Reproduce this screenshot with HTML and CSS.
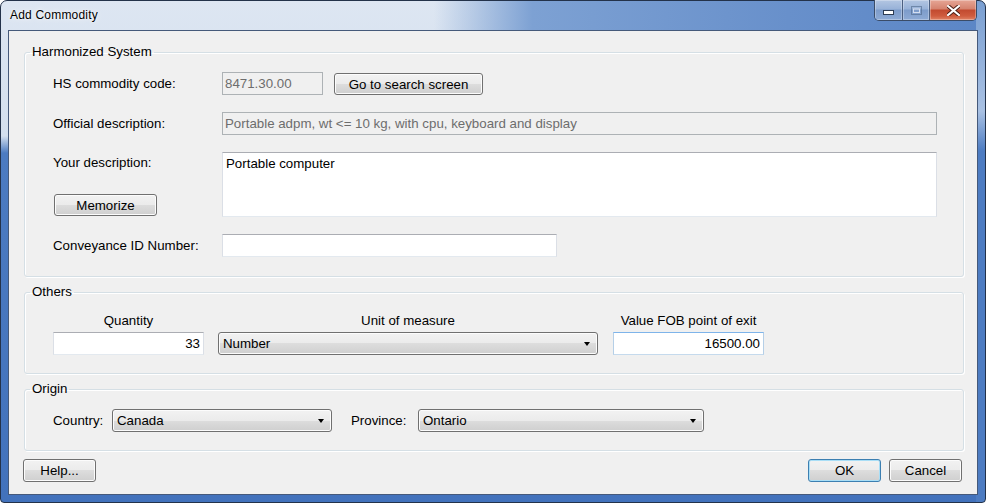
FILE: index.html
```
<!DOCTYPE html>
<html lang="en">
<head>
    <meta charset="utf-8">
    <title>Add Commodity</title>
    <link rel="stylesheet" href="styles.css">
</head>
<body>

    <div class="window">

        <div class="titlebar">
            <span class="title">Add Commodity</span>
            <div class="caption">
                <span class="cap min">
                    <svg width="11" height="5" viewBox="0 0 11 5"><rect x="0.5" y="0.5" width="10" height="4" fill="#fff" stroke="#2c3b53"/></svg>
                </span>
                <span class="cap max">
                    <svg width="11" height="9" viewBox="0 0 11 9"><rect x="0.5" y="0.5" width="10" height="8" fill="none" stroke="#4f6788" opacity="0.6"/><rect x="2.5" y="3" width="6" height="3.5" fill="none" stroke="#e8eef7" opacity="0.8"/></svg>
                </span>
                <span class="cap close">
                    <svg width="13" height="11" viewBox="0 0 13 11"><path d="M1 1 L12 10 M12 1 L1 10" stroke="#4a1d14" stroke-width="4" stroke-linecap="square"/><path d="M1 1 L12 10 M12 1 L1 10" stroke="#fff" stroke-width="2.2" stroke-linecap="square"/></svg>
                </span>
            </div>
        </div>

        <div class="client">

            <fieldset class="group">
                <legend>Harmonized System</legend>
                <div class="hs-grid">
                    <div class="label">HS commodity code:</div>
                    <div class="inline">
                        <div class="tb disabled code">8471.30.00</div>
                        <button type="button" class="btn search">Go to search screen</button>
                    </div>

                    <div class="label">Official description:</div>
                    <div class="tb disabled wide">Portable adpm, wt &lt;= 10 kg, with cpu, keyboard and display</div>

                    <div class="desc-cell">
                        <div class="label">Your description:</div>
                        <button type="button" class="btn memo">Memorize</button>
                    </div>
                    <div class="tb area">Portable computer</div>

                    <div class="label">Conveyance ID Number:</div>
                    <div class="tb conv"></div>
                </div>
            </fieldset>

            <fieldset class="group">
                <legend>Others</legend>
                <div class="others">
                    <div class="col qty">
                        <div class="cap-label">Quantity</div>
                        <div class="tb num">33</div>
                    </div>
                    <div class="col unit">
                        <div class="cap-label">Unit of measure</div>
                        <div class="combo">Number</div>
                    </div>
                    <div class="col value">
                        <div class="cap-label">Value FOB point of exit</div>
                        <div class="tb num focused">16500.00</div>
                    </div>
                </div>
            </fieldset>

            <fieldset class="group">
                <legend>Origin</legend>
                <div class="origin">
                    <div class="label country-label">Country:</div>
                    <div class="combo country">Canada</div>
                    <div class="label province-label">Province:</div>
                    <div class="combo province">Ontario</div>
                </div>
            </fieldset>

            <div class="actions">
                <button type="button" class="btn help">Help...</button>
                <div class="spacer"></div>
                <button type="button" class="btn default">OK</button>
                <button type="button" class="btn">Cancel</button>
            </div>

        </div>

    </div>

</body>
</html>
```

FILE: styles.css
```
html, body {
    margin: 0;
    padding: 0;
    width: 986px;
    height: 503px;
    overflow: hidden;
    background: #fff;
}

body {
    font-family: "Liberation Sans", Arial, sans-serif;
    font-size: 13.3px;
    color: #000;
}

.window {
    width: 986px;
    height: 503px;
    box-sizing: border-box;
    border: solid 1px #23324a;
    border-radius: 7px 7px 4px 4px;
    padding: 0 7px 7px;

    display: flex;
    flex-direction: column;

    background:
        linear-gradient(to bottom, #7a9fd2 0, #a9c1e3 110px, #4d7cc2 150px) right top / 9px 100% no-repeat,
        linear-gradient(to right, rgba(116, 154, 207, 0) 44%, #7da1d3 54%, #6890cb 80%, #5b86c6 100%) left top / 100% 30px no-repeat,
        linear-gradient(to bottom, #dde6f2 0, #d3dfee 135px, #4c7bc1 152px, #4272bc 100%);
}

/* title bar */
.titlebar {
    height: 29px;
    display: flex;
    align-items: flex-start;
}
.titlebar .title {
    padding: 7px 0 0 2px;
    font-size: 12px;
    letter-spacing: 0.2px;
    text-shadow: 0 0 6px rgba(255, 255, 255, 0.95), 0 0 2px rgba(255, 255, 255, 0.9);
}
.caption {
    margin: -1px 1px 0 auto;
    display: flex;
    height: 20px;
    border: solid 1px #3a4c68;
    border-top: none;
    border-radius: 0 0 5px 5px;
    overflow: hidden;
}
.cap {
    display: flex;
    align-items: center;
    justify-content: center;
    height: 20px;
    box-shadow: inset 0 0 0 1px rgba(255, 255, 255, 0.3);
}
.cap.min {
    width: 28px;
    align-items: flex-end;
    box-sizing: border-box;
    padding-bottom: 5px;
    border-right: solid 1px #4b5f80;
    background: linear-gradient(to bottom, #b3c6e2 0%, #98b2d8 45%, #7d9cca 50%, #8eabd5 100%);
}
.cap.max {
    width: 26px;
    border-right: solid 1px #4b5f80;
    background: linear-gradient(to bottom, #b3c6e2 0%, #98b2d8 45%, #7d9cca 50%, #8eabd5 100%);
}
.cap.close {
    width: 46px;
    background: linear-gradient(to bottom, #e6a696 0%, #d5826e 45%, #c24a2f 50%, #cf5c3e 80%, #e08366 100%);
}

/* client area */
.client {
    flex: 1;
    border: solid 1px #45597a;
    background-color: #f0f0f0;
    padding: 14px 13px 0 15px;

    display: flex;
    flex-direction: column;
}

.group {
    margin: 0 0 8px;
    padding: 0;
    min-width: 0;
    border: solid 1px #d5dfe5;
    border-radius: 3px;
    box-shadow: inset 1px 1px 0 #fff, 1px 1px 0 #fff;
}
.group legend {
    margin-left: 5px;
    padding: 0 2px;
    line-height: 14px;
}

.label {
    line-height: 23px;
    white-space: nowrap;
}

/* text boxes */
.tb {
    box-sizing: border-box;
    height: 23px;
    line-height: 21px;
    padding: 0 3px;
    background-color: #fff;
    border: solid 1px #dbdfe6;
    border-top-color: #abadb3;
    border-bottom-color: #e3e9ef;
    white-space: nowrap;
    overflow: hidden;
}
.tb.disabled {
    background-color: #f0f0f0;
    border-color: #adb2b5;
    color: #6d6d6d;
    padding-left: 2px;
}
.tb.num {
    text-align: right;
}
.tb.focused {
    border-color: #c5daed;
    border-top-color: #7eb4ea;
    border-left-color: #b5cfe7;
    border-right-color: #b5cfe7;
}

/* buttons */
.btn {
    box-sizing: border-box;
    height: 23px;
    padding: 0;
    font: inherit;
    color: #000;
    border: solid 1px #707070;
    border-radius: 3px;
    background: linear-gradient(to bottom, #f2f2f2 0%, #ebebeb 50%, #dddddd 50%, #cfcfcf 100%);
    box-shadow: inset 0 0 0 1px #fcfcfc;
}
.btn.default {
    border-color: #3c7fb1;
    box-shadow: inset 0 0 0 1px #a9def6;
}

/* combo boxes */
.combo {
    position: relative;
    box-sizing: border-box;
    height: 23px;
    line-height: 21px;
    padding: 0 4px;
    border: solid 1px #707070;
    border-radius: 3px;
    background: linear-gradient(to bottom, #f2f2f2 0%, #ebebeb 50%, #dddddd 50%, #cfcfcf 100%);
    box-shadow: inset 0 0 0 1px #fcfcfc;
}
.combo::after {
    content: "";
    position: absolute;
    right: 7px;
    top: 9px;
    border-left: solid 3.5px transparent;
    border-right: solid 3.5px transparent;
    border-top: solid 4px #000;
}

/* harmonized system */
.hs-grid {
    display: grid;
    grid-template-columns: 169px 715px;
    grid-template-rows: 23px 23px 65px 23px;
    row-gap: 17px;
    padding: 13px 0 19px 28px;
}
.inline {
    display: flex;
    align-items: flex-start;
}
.tb.code {
    width: 101px;
}
.btn.search {
    width: 149px;
    height: 22px;
    margin: 1px 0 0 11px;
}
.tb.area {
    height: 65px;
    line-height: 18px;
    padding-top: 2px;
}
.tb.conv {
    width: 335px;
}
.desc-cell {
    display: flex;
    flex-direction: column;
    justify-content: space-between;
}
.desc-cell .label {
    line-height: 21px;
}
.btn.memo {
    width: 103px;
    height: 22px;
    margin-left: 1px;
    margin-bottom: 1px;
}

/* others */
.others {
    display: flex;
    padding: 13px 0 18px 28px;
}
.col {
    display: flex;
    flex-direction: column;
}
.cap-label {
    text-align: center;
    line-height: 17px;
    margin-bottom: 3px;
}
.col.qty {
    width: 151px;
}
.col.unit {
    width: 380px;
    margin-left: 14px;
}
.col.value {
    width: 151px;
    margin-left: 15px;
}

/* origin */
.origin {
    display: flex;
    padding: 13px 0 18px 28px;
}
.country-label {
    width: 59px;
}
.combo.country {
    width: 220px;
}
.province-label {
    width: 67px;
    margin-left: 19px;
}
.combo.province {
    width: 286px;
}

/* bottom buttons */
.actions {
    display: flex;
    margin: 0 2px 0 -1px;
}
.actions .btn {
    width: 73px;
}
.actions .btn + .btn {
    margin-left: 8px;
}
.spacer {
    flex: 1;
}
```
